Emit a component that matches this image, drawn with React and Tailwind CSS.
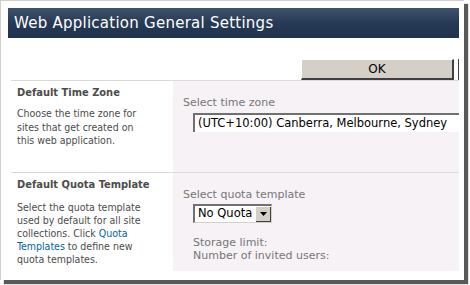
export default function App() {
  const font = { fontFamily: '"DejaVu Sans", Verdana, sans-serif' };
  const cond = { fontFamily: '"DejaVu Sans Condensed", "DejaVu Sans", Verdana, sans-serif' };
  return (
    <div className="w-[470px] h-[285px] bg-white overflow-hidden" style={font}>
      <div className="w-[464px] h-[280px] bg-white border-l border-t border-[#cfcfcf] shadow-[4px_4px_1px_rgba(0,0,0,0.65)] flex flex-col">
        <div className="ml-[7px] mt-[7px] w-[451px] h-[30px] bg-gradient-to-b from-[#3e526b] via-[#263a55] to-[#20324d] flex items-center pl-[6px]">
          <span className="text-white text-[15px] leading-none tracking-[0.25px]">Web Application General Settings</span>
        </div>
        <div className="mt-[21px] ml-[10px] w-[448px] flex justify-end items-stretch h-[21px]">
          <button className="w-[153px] h-[21px] bg-[#d4d0c8] border-r-2 border-b-2 border-[#404040] border-t border-l border-t-[#ffffff] border-l-[#ffffff] text-[12px] text-black leading-none">OK</button>
          <div className="w-[4px]" />
          <div className="w-[1px] bg-[#404040]" />
        </div>
        <div className="ml-[10px] w-[448px] border-t border-[#dadada] flex h-[92px]">
          <div className="w-[162px] pl-[6px] pt-[5px] font-stretch-condensed" style={cond}>
            <div className="text-[11px] font-bold text-[#4c4c4c] leading-[14px]">Default Time Zone</div>
            <div className="mt-[7px] w-[128px] text-[10.5px] text-[#4c4c4c] leading-[13.5px]">
              Choose the time zone for sites that get created on this web application.
            </div>
          </div>
          <div className="flex-1 bg-[#f6f2f6] pl-[10px] pt-[15px] overflow-hidden">
            <div className="text-[11px] text-[#777] leading-[14px]">Select time zone</div>
            <div className="ml-[10px] mt-[3px] h-[19px] border-l-2 border-t-2 border-[#707070] bg-white w-[300px] pl-[3px] text-[11.5px] text-black leading-[17px] whitespace-nowrap">
              (UTC+10:00) Canberra, Melbourne, Sydney
            </div>
          </div>
        </div>
        <div className="ml-[10px] w-[448px] border-t border-[#dadada] flex h-[99px]">
          <div className="w-[162px] pl-[6px] pt-[5px] font-stretch-condensed" style={cond}>
            <div className="text-[11px] font-bold text-[#4c4c4c] leading-[14px]">Default Quota Template</div>
            <div className="mt-[9px] w-[130px] text-[10.5px] text-[#4c4c4c] leading-[13px]">
              Select the quota template used by default for all site collections. Click{" "}
              <span className="text-[#0066a4]">Quota Templates</span> to define new quota templates.
            </div>
          </div>
          <div className="flex-1 bg-[#f6f2f6] pl-[10px] pt-[15px]">
            <div className="text-[11px] text-[#777] leading-[14px]">Select quota template</div>
            <div className="ml-[10px] mt-[2px] flex items-center w-[79px] h-[19px] border-l-2 border-t-2 border-[#707070] border-r border-b border-r-[#d4d0c8] border-b-[#d4d0c8] bg-white">
              <span className="flex-1 pl-[3px] text-[11.5px] text-black leading-none whitespace-nowrap">No Quota</span>
              <span className="w-[15px] h-[15px] bg-[#d4d0c8] border-r border-b border-[#404040] flex items-center justify-center">
                <svg width="7" height="4" viewBox="0 0 7 4"><path d="M0 0h7L3.5 4z" fill="#000" /></svg>
              </span>
            </div>
            <div className="ml-[10px] mt-[13px] text-[11px] text-[#777] leading-[13px]">
              <div>Storage limit:</div>
              <div>Number of invited users:</div>
            </div>
          </div>
        </div>
      </div>
    </div>
  );
}
